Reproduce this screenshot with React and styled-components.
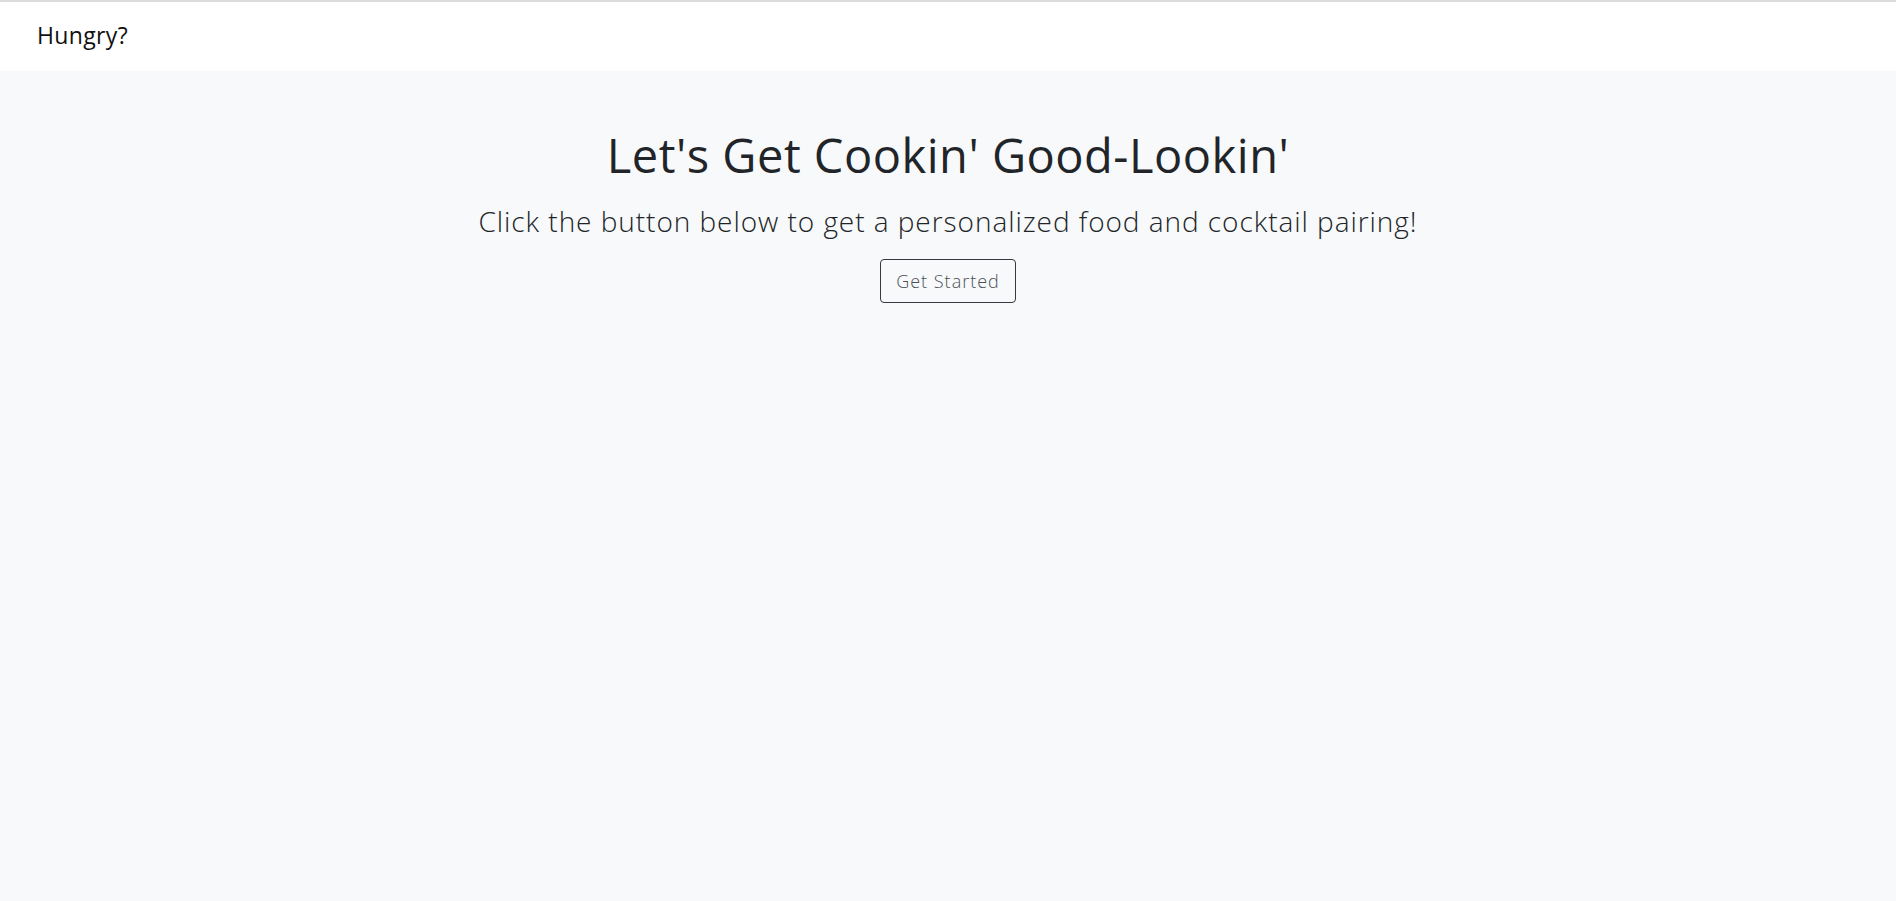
import React from "react";
import styled, { createGlobalStyle } from "styled-components";

const Global = createGlobalStyle`
  html, body { margin: 0; padding: 0; }
  body {
    background: #f8f9fa;
    font-family: "Open Sans", "Liberation Sans", sans-serif;
    color: #212529;
  }
`;

const Page = styled.div`
  min-height: 901px;
  background: #f8f9fa;
  border-top: 2px solid #dcdcdc;
  box-sizing: border-box;
`;

const NavBar = styled.header`
  height: 69px;
  box-sizing: border-box;
  background: #ffffff;
  display: flex;
  align-items: center;
  padding: 0 37px 4px;
`;

const Brand = styled.a`
  font-size: 23px;
  line-height: 28px;
  font-weight: 400;
  color: #111;
  text-decoration: none;
  letter-spacing: 0.35px;
`;

const Hero = styled.main`
  display: flex;
  flex-direction: column;
  align-items: center;
  padding-top: 56px;
`;

const Title = styled.h1`
  margin: 0;
  font-size: 47px;
  font-weight: 400;
  line-height: 56px;
  letter-spacing: 0.5px;
  color: #212529;
`;

const Lead = styled.p`
  margin: 21px 0 0;
  font-size: 28px;
  font-weight: 300;
  line-height: 34px;
  letter-spacing: 0.95px;
  color: #212529;
`;

const OutlineButton = styled.button`
  margin-top: 21px;
  font-family: inherit;
  font-size: 18px;
  font-weight: 300;
  line-height: 26px;
  letter-spacing: 1px;
  padding: 8px 15px;
  color: #495057;
  background: transparent;
  border: 1px solid #343a40;
  border-radius: 4px;
  cursor: pointer;
`;

export default function App() {
  return (
    <Page>
      <Global />
      <NavBar>
        <Brand href="#">Hungry?</Brand>
      </NavBar>
      <Hero>
        <Title>Let's Get Cookin' Good-Lookin'</Title>
        <Lead>Click the button below to get a personalized food and cocktail pairing!</Lead>
        <OutlineButton>Get Started</OutlineButton>
      </Hero>
    </Page>
  );
}
